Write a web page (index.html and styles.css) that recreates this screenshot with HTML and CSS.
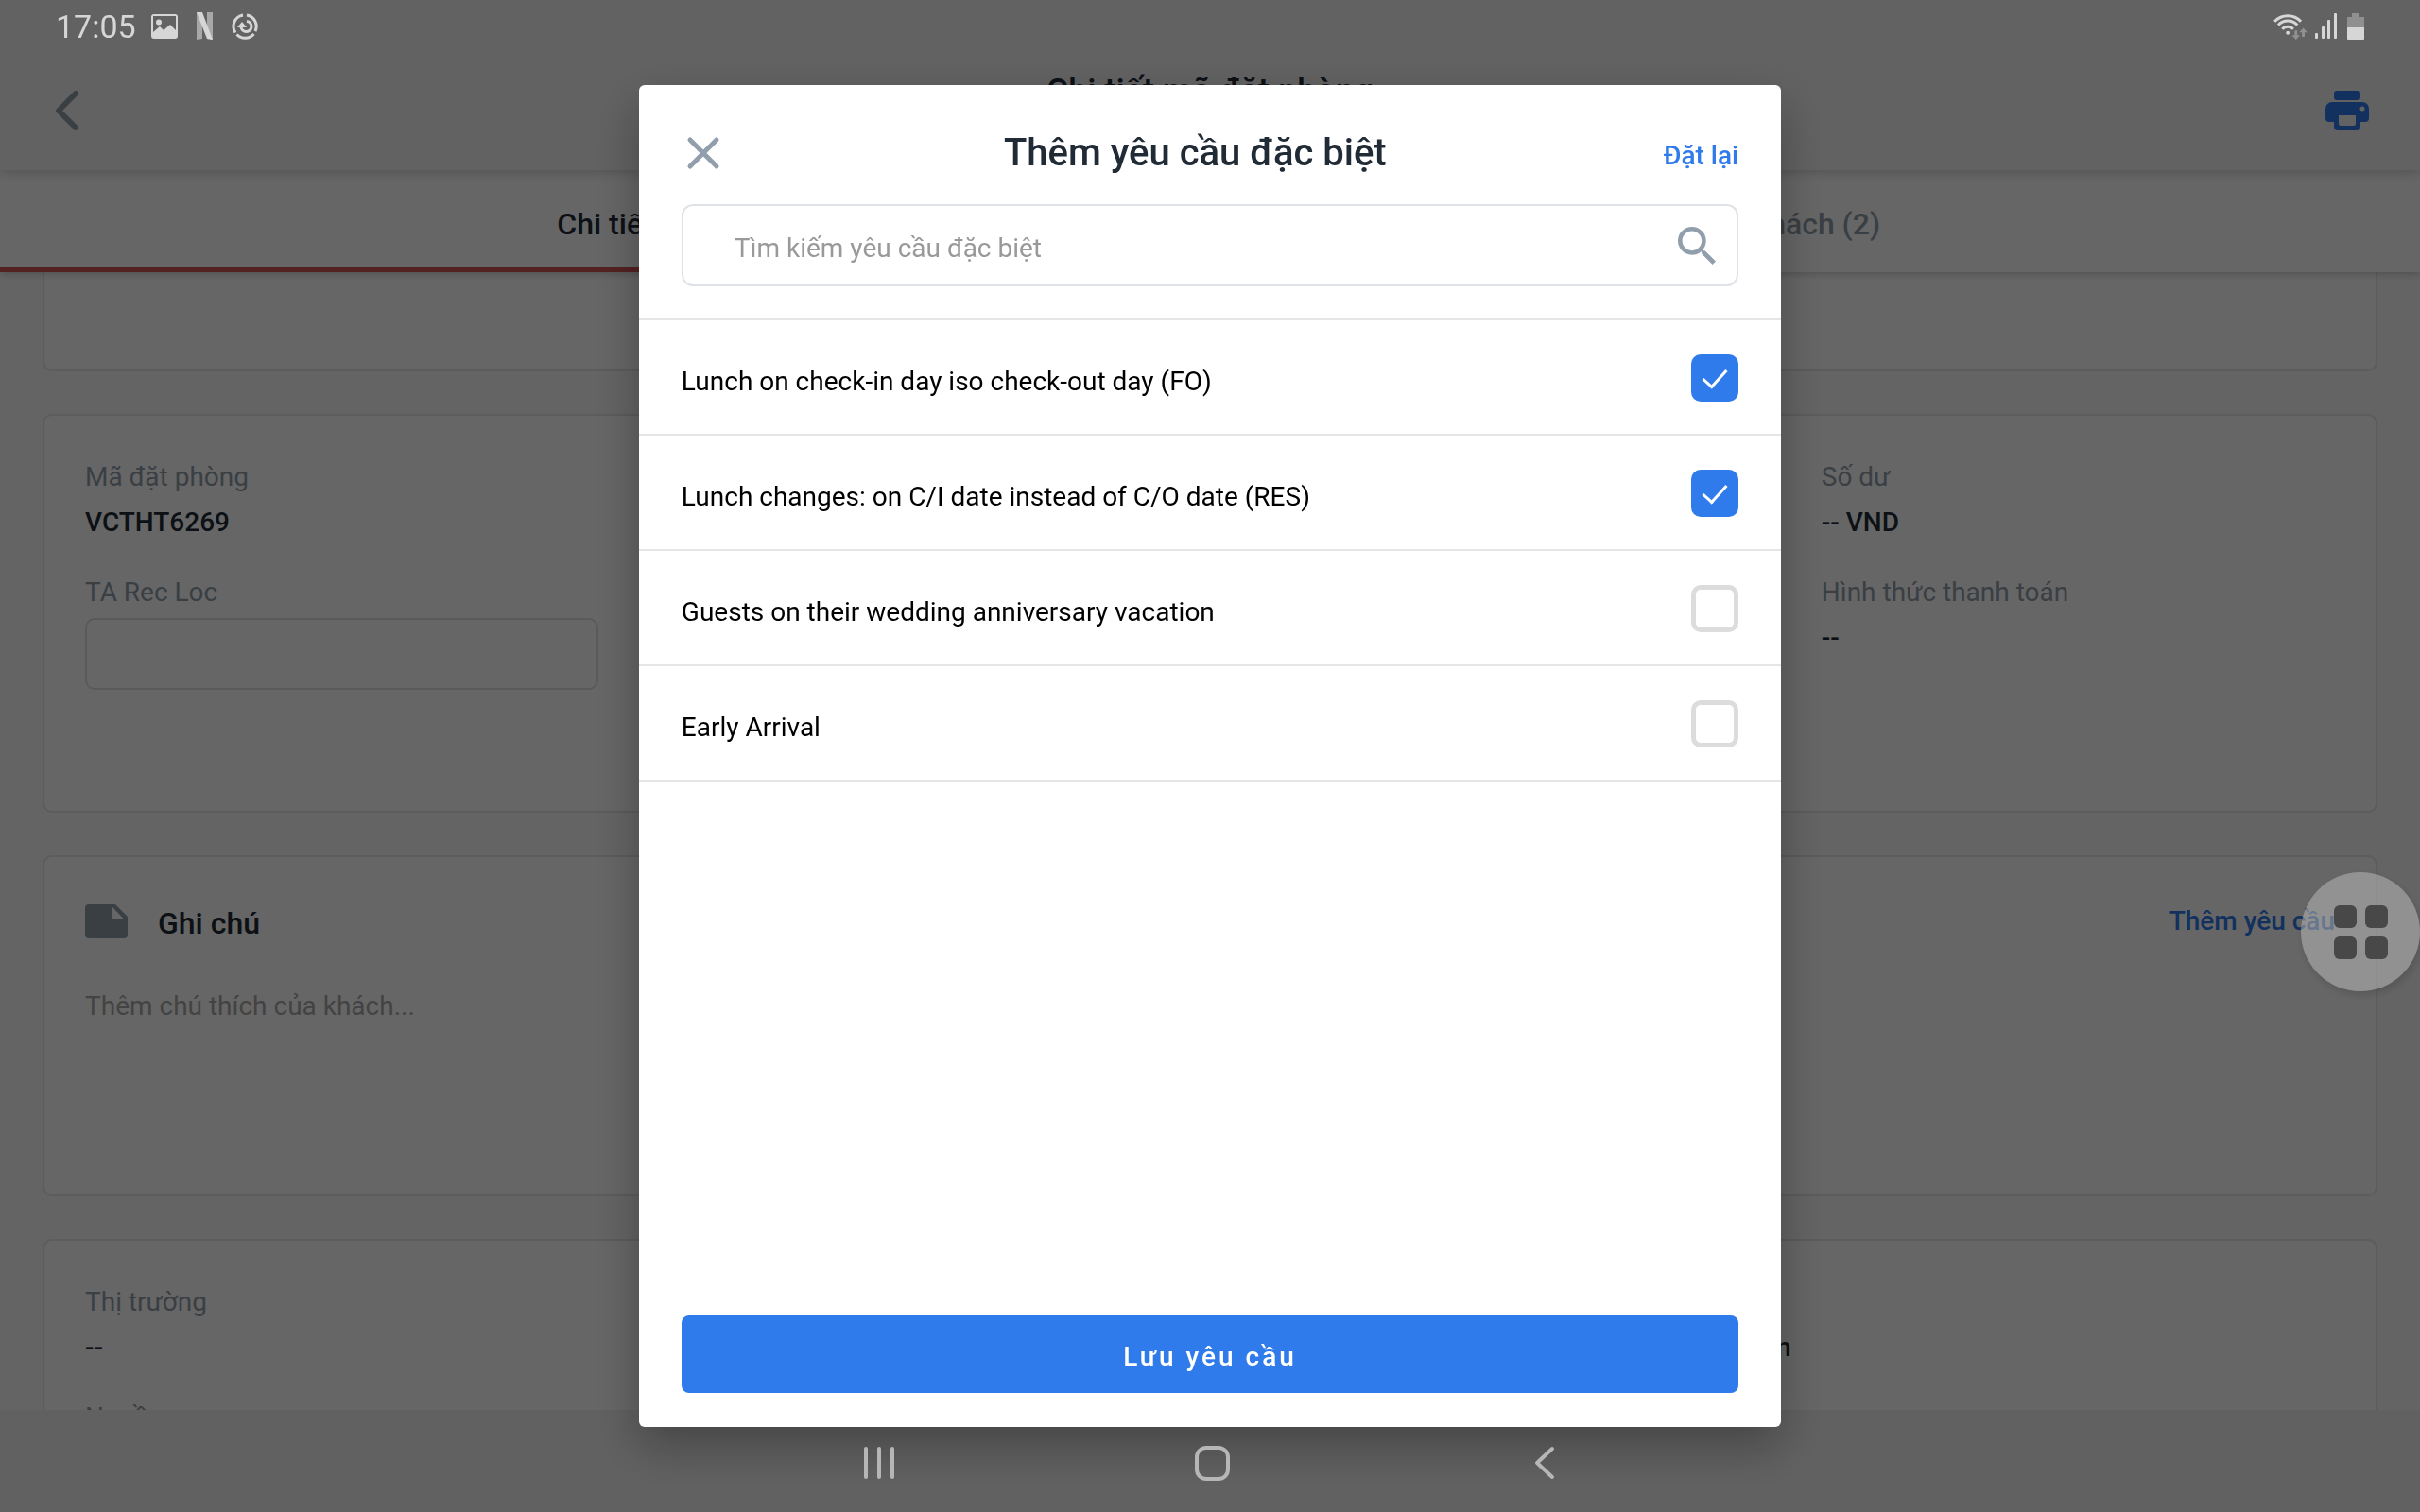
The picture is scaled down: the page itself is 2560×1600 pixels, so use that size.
FILE: index.html
```html
<!DOCTYPE html>
<html lang="vi">
<head>
  <meta charset="UTF-8" />
  <meta name="viewport" content="width=device-width, initial-scale=1.0"/>
  <title>Chi tiết mã đặt phòng</title>
  <link rel="stylesheet" href="styles.css">
</head>
<body>
  <div class="app">
    <header class="app-header">
      <button class="icon-btn" type="button" aria-label="Quay lại">
        <svg width="46" height="44" viewBox="0 0 46 44" fill="none" stroke="#919eab" stroke-width="6" stroke-linecap="round" stroke-linejoin="round"><path d="M26 4 8 22l18 18"/></svg>
      </button>
      <h1>Chi tiết mã đặt phòng</h1>
      <button class="icon-btn" type="button" aria-label="In">
        <svg width="46" height="42" viewBox="0 0 46 42" fill="#2f7beb">
          <rect x="9" y="0" width="28" height="10" rx="3"/>
          <path fill-rule="evenodd" d="M7 12h32a7 7 0 0 1 7 7v10a4 4 0 0 1-4 4h-5v5a4 4 0 0 1-4 4H13a4 4 0 0 1-4-4v-5H4a4 4 0 0 1-4-4V19a7 7 0 0 1 7-7zm7 14v9a2 2 0 0 0 2 2h14a2 2 0 0 0 2-2v-9zM39 16.500a2.500 2.500 0 1 0 0 5 2.500 2.500 0 0 0 0-5z"/>
        </svg>
      </button>
    </header>

    <nav class="tabs">
      <a class="tab active" href="#details">Chi tiết</a>
      <a class="tab" href="#guests">Khách (2)</a>
    </nav>

    <main class="content">
      <section class="card card-top"></section>

      <section class="card card-booking">
        <div class="field">
          <span class="label">Mã đặt phòng</span>
          <span class="value">VCTHT6269</span>
        </div>
        <div class="field col-last">
          <span class="label">Số dư</span>
          <span class="value">-- VND</span>
        </div>
        <div class="field">
          <label class="label" for="taRecLoc">TA Rec Loc</label>
          <input class="text-input" type="text" id="taRecLoc" />
        </div>
        <div class="field col-last">
          <span class="label">Hình thức thanh toán</span>
          <span class="value">--</span>
        </div>
      </section>

      <section class="card card-notes">
        <div class="notes-head">
          <svg width="45" height="36" viewBox="0 0 45 36" fill="#919eab"><path fill-rule="evenodd" d="M4 0h28l13 13v19a4 4 0 0 1-4 4H4a4 4 0 0 1-4-4V4a4 4 0 0 1 4-4zm25 3v11a2 2 0 0 0 2 2h10.500z"/></svg>
          <h2>Ghi chú</h2>
          <button class="link-btn" type="button">Thêm yêu cầu</button>
        </div>
        <textarea class="note-input" aria-label="Ghi chú" placeholder="Thêm chú thích của khách..."></textarea>
      </section>

      <section class="card card-market">
        <div class="field">
          <span class="label">Thị trường</span>
          <span class="value">--</span>
        </div>
        <div class="field col-third">
          <span class="label">Thanh toán</span>
          <span class="value">Tại khách sạn</span>
        </div>
        <div class="field">
          <span class="label">Nguồn</span>
        </div>
      </section>
    </main>

    <div class="nav-space"></div>
  </div>

  <div class="overlay">
    <div class="dialog" role="dialog" aria-modal="true" aria-labelledby="dialogTitle">
      <div class="dialog-head">
        <button class="close-btn" type="button" aria-label="Đóng">
          <svg width="36" height="36" viewBox="0 0 36 36" stroke="#919eab" stroke-width="5" stroke-linecap="round"><path d="M4 4l28 28M32 4 4 32"/></svg>
        </button>
        <h2 id="dialogTitle">Thêm yêu cầu đặc biệt</h2>
        <button class="link-btn reset-btn" type="button">Đặt lại</button>
      </div>

      <div class="search">
        <input type="text" aria-label="Tìm kiếm yêu cầu đặc biệt" placeholder="Tìm kiếm yêu cầu đặc biệt" />
        <svg width="40" height="40" viewBox="3 3 17.500 17.500" fill="#919eab"><path d="M15.500 14h-.79l-.28-.27A6.471 6.471 0 0 0 16 9.500 6.500 6.500 0 1 0 9.500 16c1.610 0 3.090-.59 4.230-1.570l.27.28v.79l5 4.990L20.490 19l-4.990-5zm-6 0C7.010 14 5 11.990 5 9.500S7.010 5 9.500 5 14 7.010 14 9.500 11.990 14 9.500 14z"/></svg>
      </div>

      <ul class="requests">
        <li>
          <label for="req1">Lunch on check-in day iso check-out day (FO)</label>
          <input type="checkbox" id="req1" checked />
        </li>
        <li>
          <label for="req2">Lunch changes: on C/I date instead of C/O date (RES)</label>
          <input type="checkbox" id="req2" checked />
        </li>
        <li>
          <label for="req3">Guests on their wedding anniversary vacation</label>
          <input type="checkbox" id="req3" />
        </li>
        <li>
          <label for="req4">Early Arrival</label>
          <input type="checkbox" id="req4" />
        </li>
      </ul>

      <button class="save-btn" type="button">Lưu yêu cầu</button>
    </div>
  </div>

  <!-- system bars stay above the overlay -->
  <div class="status-bar">
    <div class="status-left">
      <span class="time">17:05</span>
      <div class="status-icons">
        <svg width="28" height="26" viewBox="0 0 28 26" fill="#d6d6d6"><path fill-rule="evenodd" d="M3 0h22a3 3 0 0 1 3 3v20a3 3 0 0 1-3 3H3a3 3 0 0 1-3-3V3a3 3 0 0 1 3-3zM2 2v17l7-6 4 4 7-6 6 6V2zM8 5.500a3 3 0 1 1 0 6 3 3 0 0 1 0-6z"/></svg>
        <svg width="17" height="29" viewBox="0 0 17 29"><path fill="#a8a8a8" d="M0 0h6v28l-6 1zM11 0h6v29l-6-1z"/><path fill="#d6d6d6" d="M0 0h6l11 29-6-1z"/></svg>
        <svg width="28" height="28" viewBox="0 0 28 28" fill="none" stroke="#d6d6d6" stroke-width="3"><path d="M12 2A12 12 0 0 0 4 20.500M5.500 22.500A12 12 0 0 0 23.500 22M25 19A12 12 0 0 0 16 2M16 8.500a5.500 5.500 0 1 1-6 6"/><path fill="#d6d6d6" stroke="none" d="M11 9l5 6H6z"/></svg>
      </div>
    </div>
    <div class="status-right">
      <svg width="36" height="28" viewBox="0 0 37 29" fill="none" stroke="#d6d6d6" stroke-width="3"><path d="M1 9a20 20 0 0 1 29 0M5 13a14 14 0 0 1 21 0M9.500 17.500a8 8 0 0 1 12 0"/><circle cx="15.500" cy="21.500" r="2" fill="#d6d6d6" stroke="none"/><path fill="#909090" stroke="none" d="M23 19h3v5h3l-4.500 5-4.500-5h3zM31 26v-5h-3l4.500-5 4.500 5h-3v5z"/></svg>
      <svg width="26" height="27" viewBox="0 0 26 27" fill="#d6d6d6"><rect x="0" y="21" width="3" height="6" rx="1"/><rect x="7" y="14" width="3" height="13" rx="1"/><rect x="13" y="7" width="3" height="20" rx="1"/><rect x="20" y="0" width="3" height="27" rx="1"/></svg>
      <svg width="18" height="28" viewBox="0 0 18 28"><path fill="#909090" d="M5 0h8v4h5v11H0V4h5z"/><path fill="#d6d6d6" d="M0 15h18v12a1 1 0 0 1-1 1H1a1 1 0 0 1-1-1z"/></svg>
    </div>
  </div>

  <button class="float-btn" type="button" aria-label="Menu trợ giúp">
    <span></span><span></span><span></span><span></span>
  </button>

  <div class="nav-bar">
    <button type="button" aria-label="Ứng dụng gần đây">
      <svg width="36" height="36" viewBox="0 0 36 36" stroke="#b6b6b6" stroke-width="4" stroke-linecap="round"><path d="M4 3v30M18 3v30M32 3v30"/></svg>
    </button>
    <button type="button" aria-label="Màn hình chính">
      <svg width="38" height="38" viewBox="0 0 38 38" fill="none" stroke="#b6b6b6" stroke-width="4"><rect x="3" y="3" width="33" height="33" rx="10"/></svg>
    </button>
    <button type="button" aria-label="Trở về">
      <svg width="24" height="36" viewBox="0 0 24 36" fill="none" stroke="#b6b6b6" stroke-width="4" stroke-linecap="round" stroke-linejoin="round"><path d="M20 3 4 18l16 15"/></svg>
    </button>
  </div>
</body>
</html>
```

FILE: styles.css
```css
* {
  box-sizing: border-box;
}

body {
  margin: 0;
  font-family: Roboto, "Noto Sans", sans-serif;
  font-size: 28px;
  line-height: 36px;
  color: #212b36;
  overflow: hidden;
}

h1, h2 {
  margin: 0;
  font-size: 32px;
  line-height: 40px;
  font-weight: 500;
}

button {
  font: inherit;
  color: inherit;
  background: none;
  border: none;
  padding: 0;
}

svg {
  display: block;
}

.app {
  display: flex;
  flex-direction: column;
  height: 100vh;
  background: #fafafa;
}

/* header and tabs */
.app-header {
  flex: none;
  display: flex;
  align-items: center;
  justify-content: space-between;
  height: 180px;
  padding: 54px 54px 0;
  background: #f5f5f5;
  box-shadow: 0 2px 12px rgba(0,0,0,0.2);
  z-index: 2;
}

.app-header h1 {
  padding-bottom: 40px;
  font-size: 36px;
}

.tabs {
  flex: none;
  display: flex;
  height: 108px;
  background: #fff;
  box-shadow: 0 2px 8px rgba(0,0,0,0.2);
  z-index: 1;
}

.tab {
  flex: 1;
  display: flex;
  align-items: center;
  justify-content: center;
  padding-top: 10px;
  font-size: 32px;
  font-weight: 500;
  color: #919eab;
  text-decoration: none;
  border-bottom: 5px solid transparent;
}

.tab.active {
  color: #212b36;
  border-bottom-color: #d05552;
}

/* cards */
.content {
  flex: 1;
  min-height: 0;
  overflow: hidden;
  display: flex;
  flex-direction: column;
  gap: 45px;
  padding: 0 45px;
}

.card {
  flex: none;
  background: #fff;
  border: 2px solid #e5e5e5;
  border-radius: 10px;
  padding: 46px 43px;
}

.card-top {
  height: 105px;
  border-top: none;
  border-radius: 0 0 10px 10px;
}

.card-booking {
  display: grid;
  grid-template-columns: repeat(4, 1fr);
  grid-auto-rows: min-content;
  gap: 26px 69px;
  min-height: 422px;
}

.card-market {
  display: grid;
  grid-template-columns: repeat(3, 1fr);
  grid-auto-rows: min-content;
  gap: 26px 69px;
}

.col-last {
  grid-column: 4;
}

.col-third {
  grid-column: 3;
}

.field {
  display: flex;
  flex-direction: column;
  gap: 8px;
  min-height: 96px;
}

.label {
  color: #919eab;
  line-height: 38px;
}

.value {
  font-weight: 500;
  line-height: 42px;
}

.text-input {
  width: 100%;
  height: 76px;
  padding: 0 20px;
  font: inherit;
  background: #fff;
  border: 2px solid #e0e0e0;
  border-radius: 10px;
}

.card-notes {
  height: 361px;
}

.notes-head {
  display: flex;
  align-items: center;
}

.notes-head h2 {
  margin-left: 32px;
  padding-top: 4px;
}

.link-btn {
  font-weight: 500;
  color: #2f7beb;
}

.notes-head .link-btn {
  margin-left: auto;
}

.note-input {
  display: block;
  width: 100%;
  height: 160px;
  margin-top: 50px;
  padding: 0;
  font: inherit;
  border: none;
  resize: none;
}

.note-input::placeholder {
  color: #a8a8a8;
}

.nav-space {
  flex: none;
  height: 108px;
  background: #f2f2f2;
}

/* dialog */
.overlay {
  position: fixed;
  inset: 0;
  z-index: 10;
  display: flex;
  justify-content: center;
  padding: 90px 0;
  background: rgba(0,0,0,0.6);
}

.dialog {
  display: flex;
  flex-direction: column;
  width: 47.2%;
  min-width: 800px;
  padding-bottom: 36px;
  background: #fff;
  border-radius: 6px;
  box-shadow: 0 20px 50px rgba(0,0,0,0.3);
}

.dialog-head {
  display: flex;
  align-items: center;
  justify-content: space-between;
  padding: 36px 45px 18px;
}

.dialog-head h2 {
  font-size: 40px;
  line-height: 72px;
}

.reset-btn {
  padding-top: 6px;
}

.close-btn {
  width: 48px;
  padding-left: 5px;
}

.search {
  display: flex;
  align-items: center;
  height: 87px;
  margin: 0 45px 34px;
  padding: 0 22px 0 54px;
  border: 2px solid #dfe3e8;
  border-radius: 12px;
}

.search input {
  flex: 1;
  padding: 6px 0 0;
  font: inherit;
  border: none;
  outline: none;
}

.search input::placeholder {
  color: #999;
}

.requests {
  flex: 1;
  margin: 0;
  padding: 0;
  list-style: none;
  border-top: 2px solid #e5e5e5;
}

.requests li {
  display: flex;
  align-items: center;
  justify-content: space-between;
  height: 122px;
  padding: 2px 45px 0;
  color: #000;
  border-bottom: 2px solid #e5e5e5;
}

.requests label {
  padding-top: 8px;
}

.requests input {
  appearance: none;
  display: grid;
  place-items: center;
  width: 50px;
  height: 50px;
  margin: 0;
  border: 5px solid #dcdcdc;
  border-radius: 10px;
}

.requests input:checked {
  background: #2f7beb;
  border-color: #2f7beb;
}

.requests input:checked::before {
  content: "";
  width: 11px;
  height: 22px;
  margin-bottom: 6px;
  border: solid #fff;
  border-width: 0 3px 3px 0;
  transform: rotate(42deg);
}

.save-btn {
  height: 82px;
  margin: 0 45px;
  padding-top: 6px;
  font-weight: 500;
  letter-spacing: 3px;
  color: #fff;
  background: #2f7beb;
  border-radius: 8px;
}

/* system bars */
.status-bar {
  position: fixed;
  top: 0;
  left: 0;
  right: 0;
  z-index: 20;
  display: flex;
  align-items: center;
  justify-content: space-between;
  height: 55px;
  padding: 0 59px;
  color: #d6d6d6;
}

.status-left {
  display: flex;
  align-items: center;
  gap: 16px;
}

.status-icons {
  display: flex;
  align-items: center;
  gap: 20px;
}

.status-right {
  display: flex;
  align-items: center;
  gap: 8px;
}

.time {
  font-size: 34px;
}

.nav-bar {
  position: fixed;
  bottom: 0;
  left: 0;
  right: 0;
  z-index: 20;
  display: flex;
  align-items: center;
  justify-content: center;
  height: 108px;
  padding: 4px 0 0 4px;
}

.nav-bar button {
  display: flex;
  justify-content: center;
  width: 352px;
}

.float-btn {
  position: fixed;
  top: 923px;
  right: 0;
  z-index: 20;
  display: grid;
  grid-template-columns: 24px 24px;
  grid-auto-rows: 24px;
  gap: 9px;
  place-content: center;
  width: 126px;
  height: 126px;
  background: rgba(190,190,190,0.5);
  border-radius: 50%;
  box-shadow: 2px 4px 10px rgba(0,0,0,0.15);
}

.float-btn span {
  background: #484848;
  border-radius: 6px;
}
```
